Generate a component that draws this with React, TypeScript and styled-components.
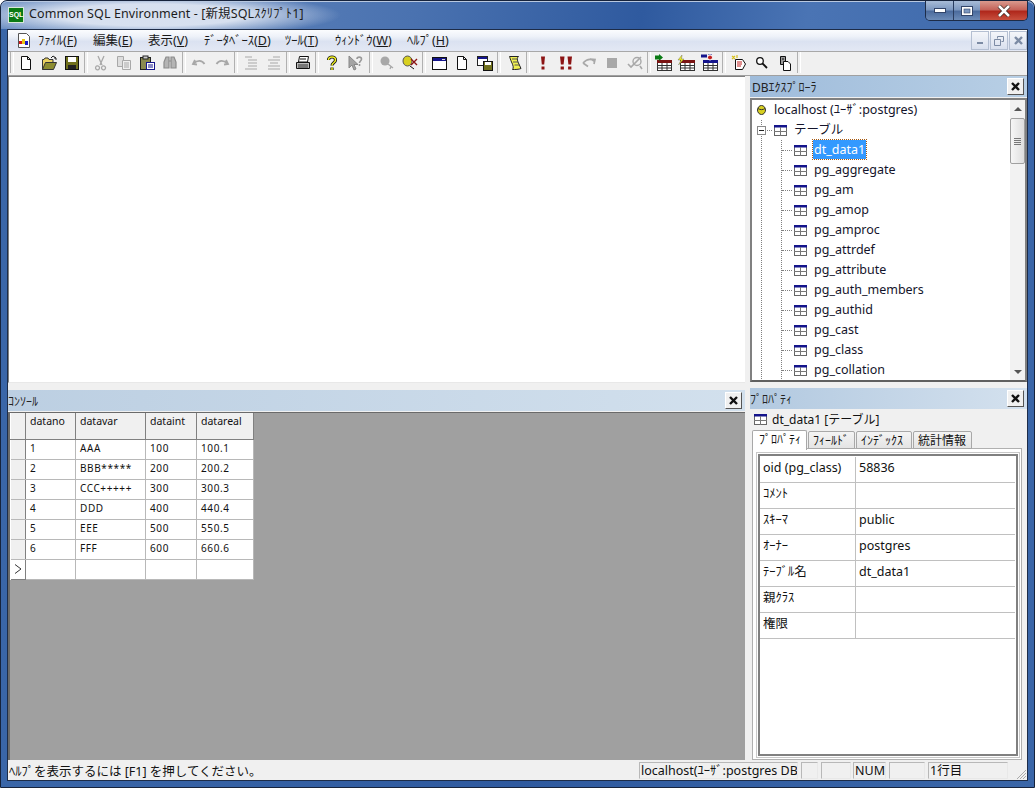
import React from 'react';
import styled, { createGlobalStyle } from 'styled-components';

const UI_FONT = '"Noto Sans", "Noto Sans CJK JP", sans-serif';

const GlobalStyle = createGlobalStyle`
	html, body, #root {
		margin: 0;
		padding: 0;
		width: 1035px;
		height: 788px;
		overflow: hidden;
		background: #fff;
	}
	* { box-sizing: border-box; }
	body {
		font-family: ${UI_FONT};
		font-size: 12.5px;
		color: #111;
	}
`;

const Window = styled.div`
	width: 1035px;
	height: 788px;
	display: flex;
	flex-direction: column;
	padding: 0 6px 6px 6px;
	border: 1px solid #16233c;
	border-radius: 7px 7px 0 0;
	margin: 0;
	background: linear-gradient(90deg, #3a66a8 0%, #2f5a9f 50%, #3a66a8 100%);
`;

const TitleBar = styled.div`
	height: 28px;
	flex: none;
	margin: 0 -6px;
	padding: 0 6px 0 7px;
	display: flex;
	justify-content: space-between;
	align-items: flex-start;
	background:
		radial-gradient(ellipse 190px 22px at 150px 14px, rgba(225, 232, 244, 0.92) 50%, rgba(225, 232, 244, 0) 100%),
		linear-gradient(100deg, #6d8fc2 0%, #4a72b0 40%, #2f5a9f 62%, #4a74b4 78%, #3d68aa 100%);
	box-shadow: inset 0 1px 0 #b8c8e0;
	border-radius: 6px 6px 0 0;
`;

const TitleLeft = styled.div`
	display: flex;
	align-items: center;
	height: 27px;
	gap: 5px;
`;

const AppLogo = styled.div`
	width: 16px;
	height: 16px;
	background: #0b7a14;
	border: 1px solid #d8e8d8;
	color: #fff;
	font: bold 7px/14px "Liberation Sans", sans-serif;
	text-align: center;
`;

const TitleText = styled.span`
	font-size: 12.5px;
	line-height: 16px;
	margin-top: -2px;
	color: #1c1c1c;
	letter-spacing: 0.1px;
`;

const CaptionGroup = styled.div`
	display: flex;
	height: 20px;
	border: 1px solid #1d2c48;
	border-top: none;
	border-radius: 0 0 5px 5px;
	overflow: hidden;
`;

const CaptionButton = styled.div<{ $close?: boolean }>`
	width: ${p => (p.$close ? '47px' : '27px')};
	display: flex;
	align-items: center;
	justify-content: center;
	border-left: ${p => (p.$close ? 'none' : '1px solid #2a3d60')};
	background: ${p =>
		p.$close
			? 'linear-gradient(180deg, #d99a8e 0%, #c5645a 45%, #b0281c 55%, #c8503e 100%)'
			: 'linear-gradient(180deg, #a8bcd8 0%, #7d98c0 45%, #4c6c9e 55%, #6d8cb8 100%)'};
	&:first-child { border-left: none; }
`;

const Client = styled.div`
	flex: 1;
	min-height: 0;
	display: flex;
	flex-direction: column;
	background: #f0f0f0;
	border: 1px solid #1d2c48;
`;

const MenuBar = styled.div`
	height: 21px;
	flex: none;
	display: flex;
	align-items: center;
	padding-left: 8px;
	background: linear-gradient(180deg, #fbfcfe 0%, #eef2f9 30%, #dbe2f1 55%, #e3e8f4 100%);
`;

const MenuIcon = styled.div`
	width: 15px;
	height: 15px;
`;

const MenuItems = styled.div`
	display: flex;
	margin-left: 0;
`;

const MenuItem = styled.span<{ $w: number }>`
	width: ${p => p.$w}px;
	padding-left: 7px;
	font-size: 12.5px;
	line-height: 18px;
	white-space: nowrap;
	color: #1a1a1a;
	u { text-underline-offset: 1px; }
`;

const MdiButtons = styled.div`
	margin-left: auto;
	display: flex;
	gap: 1px;
`;

const MdiButton = styled.div`
	width: 18px;
	height: 19px;
	border: 1px solid #b4bfd2;
	background: linear-gradient(180deg, #f4f6fa, #d9e0ee);
	display: flex;
	align-items: center;
	justify-content: center;
`;

const Toolbar = styled.div`
	height: 25px;
	flex: none;
	display: flex;
	align-items: center;
	padding-bottom: 2px;
	background: #f0f0f0;
	border-top: 1px solid #a8a8a8;
	border-bottom: 1px solid #a0a0a0;
`;

const ToolButton = styled.div`
	width: 23px;
	height: 22px;
	display: flex;
	align-items: center;
	justify-content: center;
`;

const ToolSeparator = styled.div<{ $w?: number }>`
	width: ${p => p.$w ?? 6}px;
	height: 21px;
	flex: none;
	display: flex;
	justify-content: center;
	&::before {
		content: '';
		width: 2px;
		border-left: 1px solid #b0b0b0;
		border-right: 1px solid #fff;
	}
	&:first-child { justify-content: flex-end; }
`;

const Workspace = styled.div`
	flex: 1;
	min-height: 0;
	display: flex;
	gap: 5px;
`;

const LeftColumn = styled.div`
	width: 737px;
	flex: none;
	display: flex;
	flex-direction: column;
`;

const RightColumn = styled.div`
	width: 277px;
	flex: none;
	display: flex;
	flex-direction: column;
`;

const Editor = styled.div`
	height: 307px;
	background: #fff;
	border-top: 1px solid #808080;
	border-left: 1px solid #808080;
	border-bottom: 1px solid #e8e8e8;
`;

const PanelHeader = styled.div<{ $from: string; $to: string; $pad: number }>`
	height: 21px;
	flex: none;
	display: flex;
	align-items: center;
	justify-content: space-between;
	padding: 0 3px 0 ${p => p.$pad}px;
	background: linear-gradient(90deg, ${p => p.$from}, ${p => p.$to});
	font-size: 12px;
	color: #222;
`;

const PanelClose = styled.div`
	width: 17px;
	height: 17px;
	background: #f0f0f0;
	border: 1px solid #fff;
	border-right-color: #555;
	border-bottom-color: #555;
	display: flex;
	align-items: center;
	justify-content: center;
`;

const ConsoleHeaderWrap = styled.div`
	margin-top: 7px;
`;

const ConsoleArea = styled.div`
	flex: 1;
	margin-top: 1px;
	background: #a0a0a0;
	border-top: 1px solid #6a6a6a;
	border-left: 2px solid #6a6a6a;
`;

const GridTable = styled.table`
	border-collapse: collapse;
	table-layout: fixed;
	width: 243px;
	background: #fff;
	font-family: "Noto Sans", "Liberation Sans", sans-serif;
	font-size: 10px;
	margin: 0;
`;

const GridHeadCell = styled.th<{ $w: number }>`
	width: ${p => p.$w}px;
	height: 26px;
	padding: 2px 4px 0 4px;
	text-align: left;
	vertical-align: top;
	font-weight: normal;
	font-size: 10.5px;
	line-height: 13px;
	background: #f0f0f0;
	border-right: 1px solid #808080;
	border-bottom: 1px solid #808080;
	border-left: 1px solid #fff;
`;

const GridCell = styled.td`
	height: 20px;
	padding: 0 4px 2px;
	border-right: 1px solid #b8b8b8;
	border-bottom: 1px solid #b8b8b8;
	line-height: 17px;
	letter-spacing: 0.6px;
	white-space: nowrap;
	overflow: hidden;
`;

const GridRowHead = styled.td<{ $current?: boolean }>`
	height: 20px;
	padding: 0 0 0 3px;
	background: ${p => (p.$current ? '#fff' : '#f0f0f0')};
	border-right: 1px solid #808080;
	border-bottom: 1px solid ${p => (p.$current ? '#808080' : '#b8b8b8')};
	line-height: 0;
`;

const Explorer = styled.div`
	height: 284px;
	flex: none;
	margin-top: 1px;
	display: flex;
	background: #fff;
	border: 2px solid #808080;
	border-bottom-color: #606060;
`;

const TreeList = styled.div`
	flex: 1;
	overflow: hidden;
`;

const TreeRow = styled.div`
	height: 20px;
	display: flex;
	font-size: 12.5px;
	line-height: 19px;
	white-space: nowrap;
`;

const TreeSlot = styled.div<{ $guide?: boolean; $elbow?: boolean }>`
	position: relative;
	width: 20px;
	flex: none;
	display: flex;
	align-items: center;
	${p =>
		p.$guide
			? `background-image: repeating-linear-gradient(180deg, #808080 0 1px, transparent 1px 2px);
	background-size: 1px 100%;
	background-position: 9px 0;
	background-repeat: no-repeat;`
			: ''}
	${p =>
		p.$elbow
			? `&::after {
		content: '';
		position: absolute;
		left: 10px;
		right: 0;
		top: 10px;
		border-top: 1px dotted #808080;
	}`
			: ''}
`;

const IconSlot = styled.div`
	width: 20px;
	flex: none;
	padding-left: 2px;
	display: flex;
	align-items: center;
`;

const Expander = styled.div`
	width: 9px;
	height: 9px;
	margin-left: 5px;
	background: #fff;
	border: 1px solid #8a8a8a;
	display: flex;
	align-items: center;
	justify-content: center;
	z-index: 1;
	&::before {
		content: '';
		width: 5px;
		border-top: 1px solid #222;
	}
`;

const TreeLabel = styled.span<{ $selected?: boolean }>`
	margin-left: ${p => (p.$selected ? '1px' : '2px')};
	height: 19px;
	padding: 0 ${p => (p.$selected ? '1px' : '0')};
	color: ${p => (p.$selected ? '#fff' : '#14142b')};
	background: ${p => (p.$selected ? '#3399ff' : 'transparent')};
	outline: ${p => (p.$selected ? '1px dotted #a85a10' : 'none')};
`;

const Scrollbar = styled.div`
	width: 15px;
	flex: none;
	display: flex;
	flex-direction: column;
	background: #f2f2f2;
	align-items: center;
`;

const ScrollArrow = styled.div<{ $down?: boolean }>`
	height: 17px;
	width: 100%;
	display: flex;
	align-items: center;
	justify-content: center;
	&::before {
		content: '';
		border-left: 4px solid transparent;
		border-right: 4px solid transparent;
		${p => (p.$down ? 'border-top: 4px solid #555;' : 'border-bottom: 4px solid #555;')}
	}
`;

const ScrollTrack = styled.div`
	flex: 1;
	width: 100%;
	padding-top: 1px;
`;

const ScrollThumb = styled.div`
	width: 15px;
	height: 46px;
	border: 1px solid #a0a0a0;
	border-radius: 2px;
	background: linear-gradient(90deg, #f6f6f6, #dedede);
	display: flex;
	align-items: center;
	justify-content: center;
	&::before {
		content: '';
		width: 7px;
		height: 7px;
		background: repeating-linear-gradient(180deg, #777 0 1px, transparent 1px 2px);
	}
`;

const PropHeaderWrap = styled.div`
	margin-top: 6px;
`;

const PropertyBody = styled.div`
	flex: 1;
	min-height: 0;
	display: flex;
	flex-direction: column;
	padding: 0 5px 0 2px;
`;

const PropTitle = styled.div`
	height: 20px;
	flex: none;
	display: flex;
	align-items: center;
	gap: 5px;
	padding-left: 2px;
	font-size: 12px;
`;

const TabBar = styled.div`
	height: 20px;
	flex: none;
	display: flex;
	align-items: flex-end;
	position: relative;
	z-index: 1;
	gap: 1px;
`;

const Tab = styled.div<{ $active?: boolean; $w: number }>`
	width: ${p => p.$w}px;
	height: ${p => (p.$active ? '20px' : '18px')};
	padding-left: ${p => (p.$active ? '6px' : '4px')};
	background: ${p => (p.$active ? '#fff' : 'linear-gradient(180deg, #f4f4f4, #e4e4e4)')};
	border: 1px solid #a8a8a8;
	border-bottom: ${p => (p.$active ? 'none' : '1px solid #a8a8a8')};
	border-radius: 2px 2px 0 0;
	font-size: 12px;
	line-height: 17px;
	white-space: nowrap;
	overflow: hidden;
	${p => (p.$active ? 'margin-bottom: -1px;' : '')}
`;

const TabPanel = styled.div`
	flex: 1;
	min-height: 0;
	margin-top: -1px;
	background: #fff;
	border: 1px solid #b0b0b0;
	padding: 5px 3px 3px 5px;
`;

const PropFrame = styled.div`
	height: 100%;
	background: #fff;
	border: 2px solid #808080;
	outline: 1px solid #c8c8c8;
	outline-offset: 1px;
	padding: 1px 1px 0 0;
`;

const PropRow = styled.div`
	height: 26px;
	display: grid;
	grid-template-columns: 96px 1fr;
	border-bottom: 1px solid #c0c0c0;
	line-height: 22px;
	font-size: 12.5px;
`;

const PropName = styled.div`
	padding-left: 3px;
	border-right: 1px solid #c0c0c0;
	white-space: nowrap;
`;

const PropValue = styled.div`
	padding-left: 3px;
`;

const StatusBar = styled.div`
	height: 20px;
	flex: none;
	display: flex;
	align-items: center;
	background: #f0f0f0;
	font-size: 12.5px;
`;

const StatusMessage = styled.div`
	width: 631px;
	padding-left: 1px;
	white-space: nowrap;
`;

const StatusCell = styled.div<{ $w: number; $gap?: number }>`
	width: ${p => p.$w}px;
	flex: none;
	margin-left: ${p => p.$gap ?? 2}px;
	height: 17px;
	line-height: 16px;
	padding-left: 1px;
	border: 1px solid #b8b8b8;
	border-right-color: #e8e8e8;
	border-bottom-color: #e8e8e8;
	white-space: nowrap;
	overflow: hidden;
`;

const SizeGrip = styled.div`
	flex: 1;
	height: 100%;
	display: flex;
	justify-content: flex-end;
	align-items: flex-end;
`;

const TableIcon = () => (
	<svg width="13" height="11" viewBox="0 0 13 11">
		<rect x="0.5" y="0.5" width="12" height="10" fill="#fff" stroke="#666" />
		<rect x="0" y="0" width="13" height="2.5" fill="#14148c" />
		<path d="M0 6.5H13M6.5 2V11" stroke="#777" fill="none" />
	</svg>
);

const Doc = ({ x = 3, y = 1, w = 10, h = 14 }: { x?: number; y?: number; w?: number; h?: number }) => (
	<path
		d={`M${x + 0.5} ${y + 0.5}H${x + w - 3.5}L${x + w - 0.5} ${y + 3.5}V${y + h - 0.5}H${x + 0.5}ZM${x + w - 3.5} ${y + 0.5}V${y + 3.5}H${x + w - 0.5}`}
		fill="#fff"
		stroke="#111"
	/>
);

const TableGlyph = ({ head }: { head: string }) => (
	<g>
		<rect x="3.5" y="6.5" width="14" height="10" fill="#fff" stroke="#333" />
		<rect x="3" y="6" width="15" height="3" fill={head} />
		<path d="M3 11.5H18M3 14H18M8 9V17M13 9V17" stroke="#333" fill="none" />
	</g>
);

const GRAY = '#a8a8a8';

const ICONS: Record<string, React.ReactNode> = {
	new: <Doc />,
	open: (
		<>
			<path d="M1.5 14.5V4.5H3L4 3H7L8 4.5H12V7" fill="#e8d060" stroke="#333" />
			<path d="M1.5 14.5L4.5 7.5H15.5L12.5 14.5Z" fill="#8c8c30" stroke="#333" />
			<path d="M10 3L12 1L15 3M15 3V5M15 3H13" stroke="#222" fill="none" />
		</>
	),
	save: (
		<>
			<rect x="1.5" y="1.5" width="13" height="13" fill="#70701c" stroke="#111" />
			<rect x="4" y="2" width="8" height="5" fill="#fff" />
			<rect x="4" y="10" width="8" height="4" fill="#222" />
		</>
	),
	cut: (
		<path d="M5 1L9 10M11 1L7 10M6 11.5A2 2 0 1 1 5.9 11.4M12 11.5A2 2 0 1 1 11.9 11.4" stroke={GRAY} strokeWidth="1.3" fill="none" />
	),
	copy: (
		<>
			<path d="M1.5 1.5H7.5V11.5H1.5Z" fill="#ddd" stroke={GRAY} />
			<path d="M6.5 5.5H14.5V14.5H6.5Z" fill="#eee" stroke={GRAY} />
			<path d="M8 8H13M8 10H13M8 12H13" stroke={GRAY} />
		</>
	),
	paste: (
		<>
			<rect x="1.5" y="2.5" width="10" height="12" fill="#8a8a50" stroke="#222" />
			<rect x="4" y="1" width="5" height="3" fill="#ccc" stroke="#222" />
			<rect x="7.5" y="7.5" width="8" height="7" fill="#fff" stroke="#14148c" />
			<path d="M9 10H14M9 12H14" stroke="#14148c" />
		</>
	),
	find: (
		<path d="M2 13V7L4 2H7V13ZM9 13V2H12L14 7V13ZM7 6H9" fill="#b4b4b4" stroke="#8c8c8c" strokeWidth="1.2" />
	),
	undo: <path d="M4 5L2 9L6 9.5M3 8.5C6 5 11 5 13.5 9" stroke={GRAY} strokeWidth="1.8" fill="none" />,
	redo: <path d="M12 5L14 9L10 9.5M13 8.5C10 5 5 5 2.5 9" stroke={GRAY} strokeWidth="1.8" fill="none" />,
	indent: <path d="M2 2H9M5 5H14M5 8H14M5 11H14M2 14H14" stroke={GRAY} fill="none" />,
	outdent: <path d="M7 2H14M2 5H14M4 8H12M2 11H14M2 14H14" stroke={GRAY} fill="none" />,
	print: (
		<>
			<path d="M4.5 1.5H13.5L12.5 7H3.5Z" fill="#fff" stroke="#111" />
			<path d="M1.5 7.5H14.5V13.5H1.5Z" fill="#bbb" stroke="#111" />
			<path d="M3 10H13M3 12H13" stroke="#333" />
			<path d="M5 4H11" stroke="#111" />
		</>
	),
	help: (
		<path d="M4.5 5C4.5 1 11.5 1 11.5 5C11.5 8 8 7.5 8 10.5M8 12.5V15" stroke="#111" strokeWidth="3.2" fill="none" />
	),
	whatsThis: (
		<>
			<path d="M2 1V13L5 10L7 15L9 14L7 9.5H11Z" fill="#a4a4a4" stroke="#888" />
			<path d="M10 4C10 1.5 14.5 1.5 14.5 4C14.5 6 12.5 6 12.5 8M12.5 9V11" stroke="#999" strokeWidth="1.6" fill="none" />
		</>
	),
	connect: (
		<>
			<circle cx="6" cy="6" r="4.5" fill={GRAY} />
			<path d="M9 9L14 13M12 11.5L11 14" stroke={GRAY} strokeWidth="1.3" fill="none" />
		</>
	),
	disconnect: (
		<>
			<ellipse cx="5.5" cy="6" rx="4.5" ry="5" fill="#d8d020" stroke="#555" />
			<path d="M9 4L15 10M15 4L9 10" stroke="#8c1414" strokeWidth="1.4" />
			<path d="M8 11L12 14" stroke="#111" />
		</>
	),
	win: (
		<>
			<rect x="1.5" y="2.5" width="14" height="12" fill="#fff" stroke="#111" />
			<rect x="2" y="3" width="13" height="3" fill="#14148c" />
			<path d="M11 4.5H14" stroke="#ddd" />
		</>
	),
	doc: <Doc />,
	saveWin: (
		<>
			<rect x="0.5" y="1.5" width="10" height="9" fill="#fff" stroke="#222" />
			<rect x="1" y="2" width="9" height="2" fill="#14148c" />
			<rect x="6.5" y="6.5" width="9" height="9" fill="#70701c" stroke="#111" />
			<rect x="8" y="7" width="6" height="3" fill="#fff" />
		</>
	),
	script: (
		<>
			<path d="M3.5 1.5H12.5C11 3 11 4 12 7L15 13.5C13 14.5 9 14.5 6.5 14.5C8 13 7 10 5.5 7C4.5 4.5 4 3 3.5 1.5Z" fill="#f0f050" stroke="#222" />
			<path d="M6 4H11M7 7H12M8.5 10H13.5" stroke="#555" />
		</>
	),
	run: <path d="M6 1.5H10L9.2 9.5H6.8ZM6.5 11.5H9.5V14.5H6.5Z" fill="#8c1414" />,
	runAll: <path d="M2 1.5H6.5L5.6 9.5H2.9ZM2.6 11.5H5.9V14.5H2.6ZM9.5 1.5H14L13.1 9.5H10.4ZM10.1 11.5H13.4V14.5H10.1Z" fill="#8c1414" />,
	step: <path d="M9 4L14 4.5L13 9M13 6C9 3 5 5 2 8M2 8L7 11.5" stroke={GRAY} strokeWidth="1.7" fill="none" />,
	stop: <rect x="3" y="3" width="10" height="10" fill={GRAY} />,
	explain: (
		<>
			<circle cx="10" cy="6.5" r="4" fill="none" stroke={GRAY} strokeWidth="1.4" />
			<path d="M1 9L4 12L14 2M13 11L15 14" stroke={GRAY} strokeWidth="1.6" fill="none" />
		</>
	),
	tableIn: (
		<svg width="20" height="18" viewBox="0 0 20 18" x="-2" y="-1">
			<TableGlyph head="#7a1414" />
			<path d="M1 1.5H5V0L9 3.5L5 7V5.5H1Z" fill="#0a7a14" />
		</svg>
	),
	tableBolt: (
		<svg width="20" height="18" viewBox="0 0 20 18" x="-2" y="-1">
			<TableGlyph head="#7a1414" />
			<path d="M5 1L1 6H4L1.5 11L7 5H4.5Z" fill="#f0f020" stroke="#555" strokeWidth="0.4" />
		</svg>
	),
	tableBack: (
		<svg width="20" height="18" viewBox="0 0 20 18" x="-2" y="-1">
			<TableGlyph head="#14148c" />
			<path d="M1 2H7M8 2L12 2" stroke="#14148c" strokeWidth="3" />
			<circle cx="10" cy="3.5" r="2.5" fill="#c02020" stroke="#fff" />
		</svg>
	),
	sparkle: (
		<>
			<path d="M4.5 4.5H11.5L14.5 9L11.5 14.5H4.5Z" fill="#fff" stroke="#111" />
			<path d="M6 7H11M6 9H11M6 11H10" stroke="#c02020" />
			<path d="M1 1L4 4M4 1L1 4M6 0V3" stroke="#d8c020" strokeWidth="1.2" />
		</>
	),
	magnify: (
		<>
			<circle cx="6" cy="6" r="3.3" fill="#fff" stroke="#111" strokeWidth="1.3" />
			<path d="M8.5 8.5L13 13" stroke="#111" strokeWidth="1.8" />
		</>
	),
	pages: (
		<>
			<path d="M3.5 1.5H8.5V9.5H3.5Z" fill="#999" stroke="#111" />
			<path d="M6.5 6.5H11L13.5 9V15.5H6.5Z" fill="#fff" stroke="#111" />
			<path d="M5 4H7" stroke="#111" />
		</>
	),
};

const ToolIcon = ({ name }: { name: string }) => (
	<svg width="16" height="16" viewBox="0 0 16 16" style={{ overflow: 'visible' }}>
		{ICONS[name]}
		{name === 'help' && (
			<path d="M4.5 5C4.5 1 11.5 1 11.5 5C11.5 8 8 7.5 8 10.5M8 12.5V15" stroke="#f0f020" strokeWidth="1.5" fill="none" />
		)}
	</svg>
);

const TOOLBAR_GROUPS = [
	['new', 'open', 'save'],
	['cut', 'copy', 'paste', 'find'],
	['undo', 'redo'],
	['indent', 'outdent'],
	['print'],
	['help', 'whatsThis'],
	['connect', 'disconnect'],
	['win', 'doc', 'saveWin'],
	['script'],
	['run', 'runAll', 'step', 'stop', 'explain'],
	['tableIn', 'tableBolt', 'tableBack'],
	['sparkle', 'magnify', 'pages'],
];

const MENUS = [
	{ label: 'ﾌｧｲﾙ(', key: 'F', w: 55 },
	{ label: '編集(', key: 'E', w: 55 },
	{ label: '表示(', key: 'V', w: 56 },
	{ label: 'ﾃﾞｰﾀﾍﾞｰｽ(', key: 'D', w: 81 },
	{ label: 'ﾂｰﾙ(', key: 'T', w: 50 },
	{ label: 'ｳｨﾝﾄﾞｳ(', key: 'W', w: 72 },
	{ label: 'ﾍﾙﾌﾟ(', key: 'H', w: 55 },
];

const TABLES = [
	'pg_aggregate',
	'pg_am',
	'pg_amop',
	'pg_amproc',
	'pg_attrdef',
	'pg_attribute',
	'pg_auth_members',
	'pg_authid',
	'pg_cast',
	'pg_class',
	'pg_collation',
];

const GRID_COLUMNS = [
	{ name: 'datano', w: 50 },
	{ name: 'datavar', w: 70 },
	{ name: 'dataint', w: 51 },
	{ name: 'datareal', w: 57 },
];

const GRID_ROWS = [
	['1', 'AAA', '100', '100.1'],
	['2', 'BBB*****', '200', '200.2'],
	['3', 'CCC+++++', '300', '300.3'],
	['4', 'DDD', '400', '440.4'],
	['5', 'EEE', '500', '550.5'],
	['6', 'FFF', '600', '660.6'],
	['', '', '', ''],
];

const PROPERTIES = [
	['oid (pg_class)', '58836'],
	['ｺﾒﾝﾄ', ''],
	['ｽｷｰﾏ', 'public'],
	['ｵｰﾅｰ', 'postgres'],
	['ﾃｰﾌﾞﾙ名', 'dt_data1'],
	['親ｸﾗｽ', ''],
	['権限', ''],
];

const CloseGlyph = ({ color = '#111', size = 9, width = 2.4 }: { color?: string; size?: number; width?: number }) => (
	<svg width={size} height={size} viewBox="0 0 9 9">
		<path d="M1 1L8 8M8 1L1 8" stroke={color} strokeWidth={width} />
	</svg>
);

export default function App() {
	return (
		<>
			<GlobalStyle />
			<Window>
				<TitleBar>
					<TitleLeft>
						<AppLogo>SQL</AppLogo>
						<TitleText>Common SQL Environment - [新規SQLｽｸﾘﾌﾟﾄ1]</TitleText>
					</TitleLeft>
					<CaptionGroup>
						<CaptionButton>
							<svg width="12" height="5" viewBox="0 0 12 5">
								<rect x="0.5" y="0.5" width="11" height="4" fill="#fff" stroke="#33456a" />
							</svg>
						</CaptionButton>
						<CaptionButton>
							<svg width="12" height="10" viewBox="0 0 12 10">
								<rect x="0.5" y="0.5" width="11" height="9" fill="#fff" stroke="#33456a" />
								<rect x="3" y="3" width="6" height="4" fill="#7d98c0" stroke="#33456a" strokeWidth="0.6" />
							</svg>
						</CaptionButton>
						<CaptionButton $close>
							<svg width="14" height="12" viewBox="0 0 14 12">
								<path d="M2 1L12 11M12 1L2 11" stroke="#33261f" strokeWidth="4" />
								<path d="M2 1L12 11M12 1L2 11" stroke="#fff" strokeWidth="2.6" />
							</svg>
						</CaptionButton>
					</CaptionGroup>
				</TitleBar>
				<Client>
					<MenuBar>
						<MenuIcon>
							<svg width="15" height="15" viewBox="0 0 15 15">
								<path d="M2.5 0.5H10.5L13.5 3.5V14.5H2.5Z" fill="#fff" stroke="#555" />
								<rect x="3" y="8" width="3" height="3" fill="#d01818" />
								<rect x="6" y="6" width="3" height="5" fill="#e8c818" />
								<rect x="9" y="8" width="3" height="4" fill="#1818c8" />
							</svg>
						</MenuIcon>
						<MenuItems>
							{MENUS.map(m => (
								<MenuItem key={m.key} $w={m.w}>
									{m.label}
									<u>{m.key}</u>)
								</MenuItem>
							))}
						</MenuItems>
						<MdiButtons>
							<MdiButton>
								<svg width="9" height="9" viewBox="0 0 9 9">
									<rect x="1" y="6" width="6" height="2" fill="#7c8ba4" />
								</svg>
							</MdiButton>
							<MdiButton>
								<svg width="10" height="10" viewBox="0 0 10 10">
									<path d="M3.5 2.5V0.5H9.5V5.5H7.5M0.5 3.5H6.5V9.5H0.5Z" fill="none" stroke="#7c8ba4" />
								</svg>
							</MdiButton>
							<MdiButton>
								<CloseGlyph color="#7c8ba4" />
							</MdiButton>
						</MdiButtons>
					</MenuBar>
					<Toolbar>
						<ToolSeparator />
						{TOOLBAR_GROUPS.map((group, i) => (
							<React.Fragment key={i}>
								{group.map(name => (
									<ToolButton key={name}>
										<ToolIcon name={name} />
									</ToolButton>
								))}
								<ToolSeparator $w={i === 5 ? 9 : 6} />
							</React.Fragment>
						))}
					</Toolbar>
					<Workspace>
						<LeftColumn>
							<Editor />
							<ConsoleHeaderWrap>
								<PanelHeader $from="#bccfe2" $to="#d2e0ed" $pad={0}>
									<span>ｺﾝｿｰﾙ</span>
									<PanelClose>
										<CloseGlyph />
									</PanelClose>
								</PanelHeader>
							</ConsoleHeaderWrap>
							<ConsoleArea>
								<GridTable>
									<thead>
										<tr>
											<GridHeadCell $w={15} />
											{GRID_COLUMNS.map(c => (
												<GridHeadCell key={c.name} $w={c.w}>
													{c.name}
												</GridHeadCell>
											))}
										</tr>
									</thead>
									<tbody>
										{GRID_ROWS.map((row, i) => {
											const isNewRow = i === GRID_ROWS.length - 1;
											return (
												<tr key={i}>
													<GridRowHead $current={isNewRow}>
														{isNewRow && (
															<svg width="8" height="10" viewBox="0 0 8 10">
																<path d="M1 0.5L7 5L1 9.5" stroke="#333" fill="none" />
															</svg>
														)}
													</GridRowHead>
													{row.map((v, j) => (
														<GridCell key={j}>{v}</GridCell>
													))}
												</tr>
											);
										})}
									</tbody>
								</GridTable>
							</ConsoleArea>
						</LeftColumn>
						<RightColumn>
							<PanelHeader $from="#9fbcdb" $to="#b8cfe5" $pad={2}>
								<span>DBｴｸｽﾌﾟﾛｰﾗ</span>
								<PanelClose>
									<CloseGlyph />
								</PanelClose>
							</PanelHeader>
							<Explorer>
								<TreeList>
									<TreeRow>
										<TreeSlot>
											<svg width="20" height="20" viewBox="0 0 20 20">
												<ellipse cx="9.5" cy="10" rx="4" ry="4.5" fill="#d8d020" stroke="#333" />
												<path d="M6 8.5C8 10 11 10 13 8.5" stroke="#333" fill="none" />
											</svg>
										</TreeSlot>
										<TreeLabel>localhost (ﾕｰｻﾞ:postgres)</TreeLabel>
									</TreeRow>
									<TreeRow>
										<TreeSlot $guide $elbow>
											<Expander />
										</TreeSlot>
										<IconSlot>
											<TableIcon />
										</IconSlot>
										<TreeLabel>テーブル</TreeLabel>
									</TreeRow>
									{['dt_data1', ...TABLES].map((name, i) => (
										<TreeRow key={name}>
											<TreeSlot $guide />
											<TreeSlot $guide $elbow />
											<IconSlot>
												<TableIcon />
											</IconSlot>
											<TreeLabel $selected={i === 0}>{name}</TreeLabel>
										</TreeRow>
									))}
								</TreeList>
								<Scrollbar>
									<ScrollArrow />
									<ScrollTrack>
										<ScrollThumb />
									</ScrollTrack>
									<ScrollArrow $down />
								</Scrollbar>
							</Explorer>
							<PropHeaderWrap>
								<PanelHeader $from="#b2c9e0" $to="#d4e1ee" $pad={0}>
									<span>ﾌﾟﾛﾊﾟﾃｨ</span>
									<PanelClose>
										<CloseGlyph />
									</PanelClose>
								</PanelHeader>
							</PropHeaderWrap>
							<PropertyBody>
								<PropTitle>
									<TableIcon />
									<span>dt_data1 [テーブル]</span>
								</PropTitle>
								<TabBar>
									<Tab $active $w={55}>ﾌﾟﾛﾊﾟﾃｨ</Tab>
									<Tab $w={47}>ﾌｨｰﾙﾄﾞ</Tab>
									<Tab $w={56}>ｲﾝﾃﾞｯｸｽ</Tab>
									<Tab $w={59}>統計情報</Tab>
								</TabBar>
								<TabPanel>
									<PropFrame>
										{PROPERTIES.map(([name, value]) => (
											<PropRow key={name}>
												<PropName>{name}</PropName>
												<PropValue>{value}</PropValue>
											</PropRow>
										))}
									</PropFrame>
								</TabPanel>
							</PropertyBody>
						</RightColumn>
					</Workspace>
					<StatusBar>
						<StatusMessage>ﾍﾙﾌﾟを表示するには [F1] を押してください。</StatusMessage>
						<StatusCell $w={159} $gap={0}>localhost(ﾕｰｻﾞ:postgres DB</StatusCell>
						<StatusCell $w={17} $gap={3} />
						<StatusCell $w={30} $gap={3} />
						<StatusCell $w={33} $gap={2}>NUM</StatusCell>
						<StatusCell $w={36} $gap={3} />
						<StatusCell $w={80} $gap={3}>1行目</StatusCell>
						<SizeGrip>
							<svg width="13" height="13" viewBox="0 0 13 13">
								<path d="M12 3L3 12M12 6L6 12M12 9L9 12" stroke="#aaa" fill="none" />
							</svg>
						</SizeGrip>
					</StatusBar>
				</Client>
			</Window>
		</>
	);
}
